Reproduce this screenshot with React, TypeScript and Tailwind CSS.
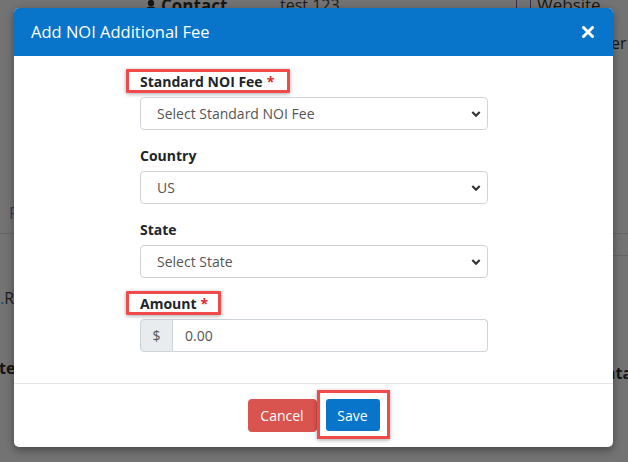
import React from "react";

const Chevron = () => (
  <svg width="10" height="7" viewBox="0 0 10 7" className="absolute right-[6px] top-1/2 -translate-y-1/2">
    <polyline points="1.3,1.5 5,5.2 8.7,1.5" fill="none" stroke="#333" strokeWidth="2.2" />
  </svg>
);

const Select = ({ text }: { text: string }) => (
  <div className="relative flex h-[33px] w-full items-center rounded-[4px] border border-[#ced4da] bg-white pl-[16px] text-[14px] text-[#555]">
    {text}
    <Chevron />
  </div>
);

const Label = ({ text, req, box }: { text: string; req?: boolean; box?: number }) => (
  <div className="relative mb-[5px] h-[21px] text-[14px] font-bold leading-[21px] text-[#212529]">
    {text}
    {req && <span className="ml-[4px] text-[#e3262d]">*</span>}
    {box && (
      <div
        className="absolute -left-[14px] -top-[2px] h-[24px] rounded-[1px] border-[3px] border-[#f04a4a] shadow-[0_1px_4px_rgba(0,0,0,0.35)]"
        style={{ width: box }}
      />
    )}
  </div>
);

export default function App() {
  return (
    <div
      className="relative h-[462px] w-[628px] overflow-hidden bg-[#737373]"
      style={{ fontFamily: '"Open Sans", "Noto Sans", sans-serif' }}
    >
      {/* dimmed page behind */}
      <div className="absolute left-[145px] -top-[7px] flex items-center gap-[4px] text-[17px] font-bold text-[#161616]">
        <svg width="12" height="13" viewBox="0 0 12 13"><circle cx="6" cy="4" r="3.2" fill="#161616" /><path d="M0.5 13 C0.5 8.5 3 7.5 6 7.5 C9 7.5 11.5 8.5 11.5 13 Z" fill="#161616" /></svg>
        Contact
      </div>
      <div className="absolute left-[280px] -top-[7px] text-[16px] text-[#1c1c1c]">test 123</div>
      <div className="absolute left-[516px] -top-[4px] h-[15px] w-[15px] border border-[#3a2a4a]" />
      <div className="absolute left-[537px] -top-[8px] text-[17px] text-[#161616]">Website</div>
      <div className="absolute left-[611px] top-[31px] text-[16px] text-[#161616]">er</div>
      <div className="absolute left-[9px] top-[201px] text-[16px] text-[#2c4260]">F</div>
      <div className="absolute left-0 top-[233px] h-px w-[14px] bg-[#666]" />
      <div className="absolute left-0 top-[286px] text-[16px] text-[#1c1c1c]"><span className="text-[#174a80]">.</span>R</div>
      <div className="absolute -left-[1px] top-[356px] text-[16px] font-bold text-[#141414]">te</div>
      <div className="absolute left-[613px] top-[233px] h-px w-[15px] bg-[#666]" />
      <div className="absolute left-[613px] top-[255px] h-px w-[15px] bg-[#666]" />
      <div className="absolute left-[605px] top-[361px] text-[16px] font-bold text-[#141414]">nta</div>

      {/* modal */}
      <div className="absolute left-[14px] top-[8px] w-[599px] overflow-hidden rounded-[5px] bg-white shadow-[0_3px_9px_rgba(0,0,0,0.4)]">
        <div className="flex h-[48px] items-center justify-between bg-[#0874ca] pl-[17px] pr-[19px]">
          <div className="text-[16.5px] font-normal text-white">Add NOI Additional Fee</div>
          <svg width="12" height="12" viewBox="0 0 12 12">
            <path d="M1.5 1.5 L10.5 10.5 M10.5 1.5 L1.5 10.5" stroke="white" strokeWidth="3" strokeLinecap="round" />
          </svg>
        </div>

        <div className="flex flex-col pb-[16px] pl-[126px] pr-[125px] pt-[15px]">
          <Label text="Standard NOI Fee" req box={164} />
          <div className="mb-[15px]"><Select text="Select Standard NOI Fee" /></div>
          <Label text="Country" />
          <div className="mb-[15px]"><Select text="US" /></div>
          <Label text="State" />
          <div className="mb-[15px]"><Select text="Select State" /></div>
          <Label text="Amount" req box={95} />
          <div className="mb-[15px] flex h-[33px] w-full">
            <div className="flex w-[33px] items-center justify-center rounded-l-[4px] border border-[#ced4da] bg-[#e9ecef] text-[14px] text-[#555]">$</div>
            <div className="flex flex-1 items-center rounded-r-[4px] border border-l-0 border-[#ced4da] pl-[12px] text-[14px] text-[#555]">0.00</div>
          </div>
        </div>

        <div className="flex justify-center gap-[9px] border-t border-[#e5e5e5] pb-[15px] pt-[15px]">
          <div className="flex h-[33px] w-[69px] items-center justify-center rounded-[4px] bg-[#d9534f] text-[14px] text-white">Cancel</div>
          <div className="relative">
            <div className="flex h-[32px] w-[54px] items-center justify-center rounded-[3px] bg-[#0874ca] text-[14px] text-white">Save</div>
            <div className="absolute -left-[9px] -top-[9px] h-[49px] w-[73px] border-[3px] border-[#f04a4a] shadow-[0_1px_4px_rgba(0,0,0,0.35)]" />
          </div>
        </div>
      </div>
    </div>
  );
}
